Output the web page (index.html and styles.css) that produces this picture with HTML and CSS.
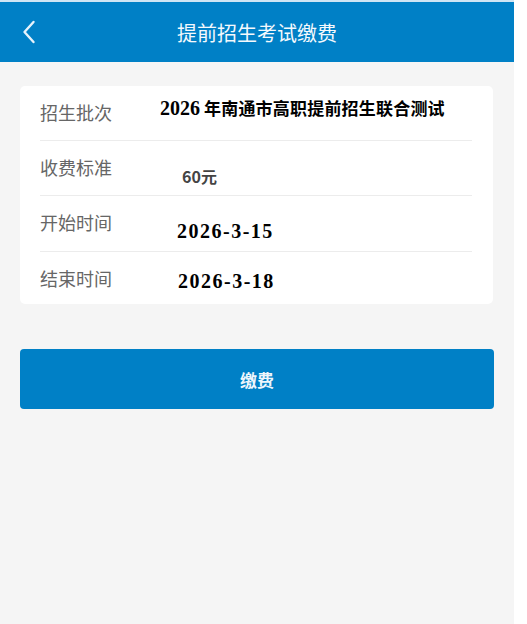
FILE: index.html
```html
<!DOCTYPE html>
<html>
  <head>
    <meta charset="utf-8">
    <title>提前招生考试缴费</title>
    <link rel="stylesheet" href="styles.css">
  </head>
  <body>
    <div class="page">
      <div class="topbar">
        <a class="back" href="#">
          <svg width="14" height="24" viewBox="0 0 14 24">
            <polyline points="11.5,2 2.5,12 11.5,22" fill="none" stroke="#e6f2fb" stroke-width="2.4" stroke-linecap="round" stroke-linejoin="round" />
          </svg>
        </a>
        <h1 class="title">提前招生考试缴费</h1>
      </div>

      <div class="card">
        <div class="row row-first">
          <span class="label">招生批次</span>
          <span class="val val-batch">2026<span class="cjk">年南通市高职提前招生联合测试</span></span>
        </div>
        <div class="row">
          <span class="label">收费标准</span>
          <span class="val val-fee">60元</span>
        </div>
        <div class="row row-tall">
          <span class="label">开始时间</span>
          <span class="val val-start">2026-3-15</span>
        </div>
        <div class="row row-last">
          <span class="label">结束时间</span>
          <span class="val val-end">2026-3-18</span>
        </div>
      </div>

      <button class="pay">缴费</button>
    </div>
  </body>
</html>
```

FILE: styles.css
```css
body {
  margin: 0;
  background-color: #fff;
  font-family: "Noto Sans CJK SC", "Noto Sans", sans-serif;
}

.page {
  width: 514px;
  min-height: 624px;
  background-color: #f5f5f5;
  display: flex;
  flex-direction: column;
}

/* top bar */
.topbar {
  height: 60px;
  border-top: 2px solid #cfe5f4;
  background-color: #0080c6;
  display: flex;
  align-items: center;
  position: relative;
}

.back {
  margin-left: 22px;
  display: flex;
  align-items: center;
}

.title {
  position: absolute;
  left: 0;
  right: 0;
  margin: 0;
  text-align: center;
  font-size: 20px;
  font-weight: normal;
  color: #f4f9fd;
  pointer-events: none;
}

/* info card */
.card {
  margin: 24px 21px 0 20px;
  padding: 0 21px 0 20px;
  background-color: #fff;
  border-radius: 5px;
}

.row {
  height: 54px;
  display: flex;
  align-items: flex-start;
  border-bottom: 1px solid #ececec;
}

.row-tall {
  height: 55px;
}

.row-last {
  height: 52px;
  border-bottom: none;
}

.label {
  width: 120px;
  flex-shrink: 0;
  margin-top: 16px;
  font-size: 18px;
  line-height: 20px;
  color: #666;
}

.val {
  font-family: "Liberation Serif", "Noto Sans CJK SC", serif;
  font-weight: bold;
  font-size: 20px;
  line-height: 22px;
  color: #000;
  white-space: nowrap;
}

.val .cjk {
  margin-left: 4px;
  font-family: "Noto Sans CJK SC", sans-serif;
  font-size: 17px;
  letter-spacing: 0.2px;
}

.val-batch {
  margin-top: 11px;
}

.val-fee {
  margin-top: 24px;
  margin-left: 22px;
  font-family: "Noto Sans CJK SC", sans-serif;
  font-size: 16px;
  color: #444;
}

.val-start {
  margin-top: 24px;
  margin-left: 17px;
  letter-spacing: 1.5px;
}

.val-end {
  margin-top: 18px;
  margin-left: 18px;
  letter-spacing: 1.5px;
}

/* pay button */
.pay {
  margin: 45px 20px 0 20px;
  height: 60px;
  border: none;
  border-radius: 4px;
  background-color: #0080c6;
  color: #eef6fc;
  font-family: "Noto Sans CJK SC", sans-serif;
  font-size: 17px;
  font-weight: bold;
}
```
